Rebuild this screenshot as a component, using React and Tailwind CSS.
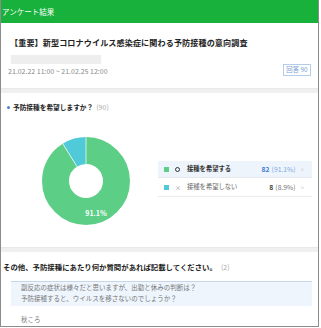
import React from 'react';

const font = { fontFamily: '"Noto Sans CJK JP", "Noto Sans", sans-serif' };

const Donut = () => {
  const r = 30.5;
  const c = 2 * Math.PI * r;
  const green = c * 0.911;
  // boundary angle for the cyan slice (from top, clockwise)
  const a = (0.911 * 360 * Math.PI) / 180;
  const x1 = 44 + 17 * Math.sin(a);
  const y1 = 44 - 17 * Math.cos(a);
  const x2 = 44 + 44 * Math.sin(a);
  const y2 = 44 - 44 * Math.cos(a);
  return (
    <svg width="88" height="88" viewBox="0 0 88 88">
      <g transform="rotate(-90 44 44)">
        <circle cx="44" cy="44" r={r} fill="none" stroke="#5dce85" strokeWidth="27" strokeDasharray={`${green} ${c}`} />
        <circle cx="44" cy="44" r={r} fill="none" stroke="#50c9d8" strokeWidth="27" strokeDasharray={`${c - green} ${c}`} strokeDashoffset={-green} />
      </g>
      <line x1="44" y1="27" x2="44" y2="0" stroke="#fff" strokeWidth="0.7" />
      <line x1={x1} y1={y1} x2={x2} y2={y2} stroke="#fff" strokeWidth="0.7" />
      <text x="54" y="79" fill="#fff" fontSize="7" fontWeight="700" textAnchor="middle" style={font}>91.1%</text>
    </svg>
  );
};

const App = () => {
  return (
    <div className="w-[321px] h-[328px] bg-white" style={font}>
      <div className="w-[319px] h-[327px] border-l border-r border-b border-[#8c8c8c] flex flex-col overflow-hidden">
        {/* header */}
        <div className="h-[23px] bg-[#17b13b] flex items-center pl-[1px]">
          <span className="text-white text-[7.5px] leading-none">アンケート結果</span>
        </div>

        {/* survey info */}
        <div className="h-[65px] relative pl-[9px] pt-[14px]">
          <div className="text-[8.1px] leading-[12px] font-bold text-[#222] tracking-[0.1px]">
            【重要】新型コロナウイルス感染症に関わる予防接種の意向調査
          </div>
          <div className="mt-[6px] ml-[1px] w-[90px] h-[9px] bg-[#eeeeee]" />
          <div className="mt-[2px] -ml-[2px] text-[7px] leading-[10px] text-[#888]">
            21.02.22 11:00 ~ 21.02.25 12:00
          </div>
          <div className="absolute left-[282px] top-[41px] w-[28px] h-[12px] border border-[#b3cce8] flex items-center justify-center text-[6.4px] text-[#7aa1d2]">
            回答 90
          </div>
        </div>

        <div className="h-[5px] bg-[#f0f0f0] border-t border-[#e8e8e8]" />

        {/* question 1 */}
        <div className="h-[154px] pt-[9px]">
          <div className="flex items-center pl-[6px] h-[10px]">
            <span className="w-[3px] h-[3px] rounded-full bg-[#4a7fd6] mr-[3px]" />
            <span className="text-[6.7px] font-bold text-[#222]">予防接種を希望しますか？</span>
            <span className="text-[7px] text-[#aaa] ml-[3px]">(90)</span>
          </div>
          <div className="flex items-start">
            <div className="ml-[41px] mt-[25px]">
              <Donut />
            </div>
            <div className="ml-[28px] mt-[49px] w-[154px] flex flex-col">
              <div className="h-[17px] bg-[#edf4fc] border-b border-[#e6eaef] flex items-center pl-[6px] pr-[8px] text-[6.3px]">
                <span className="w-[5px] h-[5px] bg-[#5dce85] mr-[6px]" />
                <span className="w-[5px] h-[5px] rounded-full border border-[#333] mr-[7px]" />
                <span className="font-bold text-[#333]">接種を希望する</span>
                <span className="ml-auto font-bold text-[#3d7bd9] text-[6.8px]">82</span>
                <span className="ml-[2px] text-[#83a9e0] text-[6.8px]">(91.1%)</span>
                <span className="ml-[5px] text-[#ccc] text-[6px]">&gt;</span>
              </div>
              <div className="h-[19px] border-b border-[#ececec] flex items-center pl-[6px] pr-[8px] text-[6.3px]">
                <span className="w-[5px] h-[5px] bg-[#50c9d8] mr-[6px]" />
                <span className="text-[#888] mr-[6px] text-[6px]">×</span>
                <span className="text-[#666]">接種を希望しない</span>
                <span className="ml-auto font-bold text-[#444] text-[6.8px]">8</span>
                <span className="ml-[2px] text-[#777] text-[6.8px]">(8.9%)</span>
                <span className="ml-[5px] text-[#ccc] text-[6px]">&gt;</span>
              </div>
            </div>
          </div>
        </div>

        <div className="h-[5px] bg-[#f0f0f0] border-t border-[#e8e8e8]" />

        {/* question 2 */}
        <div className="flex-1 pt-[10px]">
          <div className="flex items-center pl-[2px] h-[10px]">
            <span className="text-[7.4px] font-bold text-[#222]">その他、予防接種にあたり何か質問があれば記載してください。</span>
            <span className="text-[7px] text-[#aaa] ml-[4px]">(2)</span>
          </div>
          <div className="mt-[9px] ml-[10px] w-[301px] h-[25px] bg-[#eef5fd] border-t border-[#c7d6ea] pl-[10px] text-[6.5px] leading-[11px] text-[#777]">
            <div>副反応の症状は様々だと思いますが、出勤と休みの判断は？</div>
            <div>予防接種すると、ウイルスを移さないのでしょうか？</div>
          </div>
          <div className="mt-[8px] ml-[20px] text-[6.5px] leading-[10px] text-[#777]">秋ころ</div>
        </div>
      </div>
    </div>
  );
};

export default App;
